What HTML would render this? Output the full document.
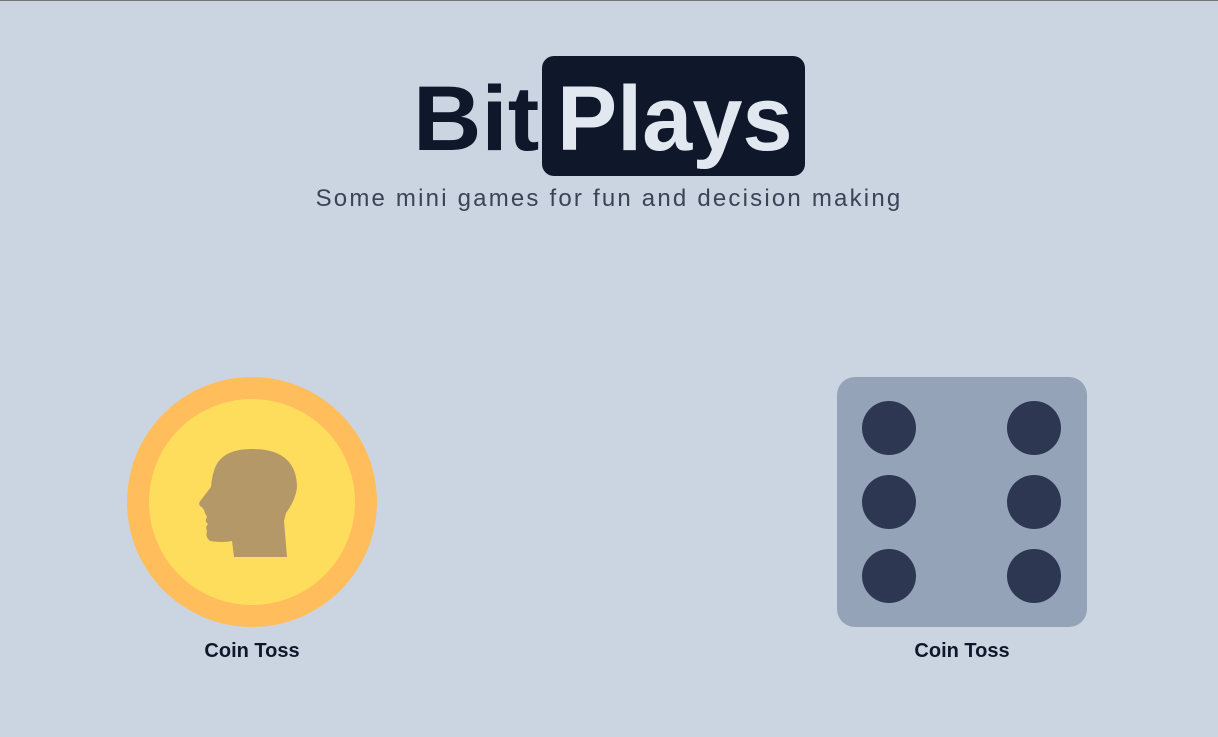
<!DOCTYPE html>
<html><head><style>
body{margin:0;width:1218px;height:736px;background:#cbd5e1;position:relative;overflow:hidden;font-family:"Liberation Sans",sans-serif;border-top:1px solid #777;box-sizing:border-box}
.t{position:absolute;font-size:92px;font-weight:bold;line-height:1;top:72px;transform-origin:left top}
.box{position:absolute;left:542px;top:55px;width:263px;height:120px;background:#0f172a;border-radius:12px}
.sub{position:absolute;left:0;width:1218px;text-align:center;top:184px;font-size:24px;color:#3b4355;letter-spacing:2.2px}
.lbl{position:absolute;top:639px;width:200px;text-align:center;font-weight:bold;font-size:20px;color:#0f172a}
</style></head><body>
<div class="box"></div>
<div class="t" style="left:413px;color:#0f172a;transform:scaleX(1.03)">Bit</div>
<div class="t" style="left:557px;color:#e2e8f0;transform:scaleX(0.98)">Plays</div>
<div class="sub">Some mini games for fun and decision making</div>
<svg width="1218" height="736" style="position:absolute;left:0;top:0">
<circle cx="252" cy="501" r="125" fill="#ffbd5c"/>
<circle cx="252" cy="501" r="103" fill="#ffdd5c"/>
<path d="M234,556 L232,540 Q222,542 210,540 Q205,536 207,530 Q205,526 208,523 Q204,520 207,516 L205,512 Q204,507 200,505 Q198,502 201,499 L211,486 Q212,475 214,470 Q220,448 252,448 Q297,448 297,487 Q295,500 286,512 L284,520 L287,556 Z" fill="#b59868"/>
<rect x="837" y="376" width="250" height="250" rx="18" fill="#94a3b8"/>
<g fill="#2e3752">
<circle cx="889" cy="427" r="27"/><circle cx="1034" cy="427" r="27"/>
<circle cx="889" cy="501" r="27"/><circle cx="1034" cy="501" r="27"/>
<circle cx="889" cy="575" r="27"/><circle cx="1034" cy="575" r="27"/>
</g>
</svg>
<div class="lbl" style="left:152px">Coin Toss</div>
<div class="lbl" style="left:862px">Coin Toss</div>
</body></html>
